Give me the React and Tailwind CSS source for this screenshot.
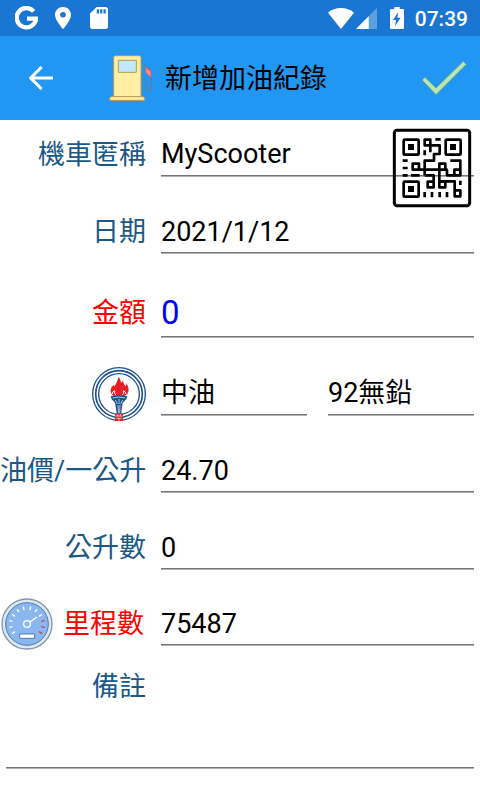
import React from "react";

function StatusBar() {
  return (
    <div className="flex h-9 items-center bg-[#1976d2] pl-[15px] pr-3 text-white">
      <svg className="h-6 w-[23px]" viewBox="0 0 69 72" fill="none" stroke="currentColor" strokeWidth="13">
        <path d="M56 16A29 29 0 1 0 63 38H36" />
      </svg>
      <svg className="ml-[17px] h-[22px] w-4" viewBox="5 2 14 20" preserveAspectRatio="none" fill="currentColor">
        <path d="M12 2C8.1 2 5 5.1 5 9c0 5.300 7 13 7 13s7-7.700 7-13c0-3.900-3.100-7-7-7zm0 9.500a2.500 2.500 0 1 1 0-5 2.500 2.500 0 0 1 0 5z" />
      </svg>
      <svg className="ml-[19px] h-[22px] w-[18px]" viewBox="4 2 16 20" preserveAspectRatio="none" fill="currentColor">
        <path d="M18 2h-8L4 8v12c0 1.100.9 2 2 2h12c1.100 0 2-.9 2-2V4c0-1.100-.9-2-2-2zm-6 6h-2V4h2v4zm3 0h-2V4h2v4zm3 0h-2V4h2v4z" />
      </svg>
      <svg className="ml-auto h-[21px] w-[26px]" viewBox="0 0 78 63" fill="currentColor">
        <path d="M39 63 0 14Q16 0 39 0T78 14Z" />
      </svg>
      <svg className="ml-[2px] h-[21px] w-[21px]" viewBox="0 0 63 63">
        <path d="M63 0V63H0Z" fill="#5e9fe0" />
        <path d="M38 25V63H0Z" fill="#fff" />
      </svg>
      <svg className="ml-[13px] h-[22px] w-[14px]" viewBox="0 0 42 66">
        <path d="M13 0H29V6H39Q42 6 42 9V63Q42 66 39 66H3Q0 66 0 63V9Q0 6 3 6H13Z" fill="#fff" />
        <path d="M25 15 9 39H18L15 58 32 32H22Z" fill="#1976d2" />
      </svg>
      <span className="ml-[11px] pt-px text-[21px] leading-6 font-medium">07:39</span>
    </div>
  );
}

function PumpIcon() {
  return (
    <svg className="h-[52px] w-[50px]" viewBox="18 21 150 156" fill="none" strokeWidth="3">
      <path d="M131 58 154 78V128Q154 136 146 136T138 128V109Q138 103 132 103H124" stroke="#5f7f9c" strokeWidth="4" />
      <path d="M137 67 153 79V97L137 83Z" fill="#f78f8f" stroke="#dc5b62" />
      <path d="M41 156V37Q41 32 46 32H118Q123 32 123 37V156Z" fill="#ffeea3" stroke="#b89b4c" />
      <path d="M55 46H109V82H55Z" fill="#c2e8ff" stroke="#b89b4c" />
      <path d="M29 166V161Q29 155 35 155H128Q134 155 134 161V166Z" fill="#ffeea3" stroke="#b89b4c" />
    </svg>
  );
}

function Header() {
  return (
    <header className="flex h-[84px] items-center bg-[#2196f3] pr-3 pl-[29px]">
      <button type="button" aria-label="返回" className="text-white">
        <svg className="h-6 w-6" viewBox="0 0 72 72" fill="none" stroke="currentColor" strokeWidth="9">
          <path d="M72 36H5M38 3 5 36 38 69" />
        </svg>
      </button>
      <div className="ml-[53px]">
        <PumpIcon />
      </div>
      <h1 className="ml-[9px] pt-[2px] text-[27px] leading-8 text-black">新增加油紀錄</h1>
      <button type="button" aria-label="儲存" className="ml-auto">
        <svg className="h-9 w-12" viewBox="540 180 144 108">
          <path d="M546 240 555 232 588 264 670 184 679 193 588 284Z" fill="#b9e5b8" stroke="#5fa883" strokeWidth="3" />
        </svg>
      </button>
    </header>
  );
}

function QrIcon() {
  return (
    <svg className="h-20 w-20" viewBox="36 24 240 240" fill="none" stroke="#000" strokeWidth="8" strokeLinejoin="round">
      <rect x="43" y="31" width="226" height="226" rx="8" strokeWidth="9" />
      <rect x="71" y="59" width="45" height="45" rx="3" />
      <rect x="197" y="59" width="45" height="45" rx="3" />
      <rect x="71" y="185" width="45" height="45" rx="3" />
      <path d="M84 81H102M210 81H228M84 207H102" strokeWidth="18" />
      <path d="M134 59H151V76H134ZM151 76V97M151 76H179V102H162V122H134V166M166 58H182M134 91V106" />
      <path d="M68 122H83M68 144H83M68 166H83M93 166H119" />
      <path d="M98 131H117V149H98ZM117 149H203M178 131H196V149H178ZM178 149V202M134 166H161V202M143 185H161V202H143ZM178 185H196V202H178ZM201 149V166H223" />
      <path d="M211 122H241V166H223V149H241M178 184H224V211M224 211H241V229H224ZM241 182V195" />
      <path d="M134 216V232M156 216V232M179 216V232M201 216V232" />
    </svg>
  );
}

function CpcLogo() {
  return (
    <svg className="h-[54px] w-[54px]" viewBox="36 33 162 162" role="img" aria-label="中油">
      <g fill="#fff" stroke="#1d4f91">
        <circle cx="117" cy="114" r="79" strokeWidth="4" />
        <circle cx="117" cy="114" r="70" strokeWidth="5" />
        <circle cx="117" cy="114" r="61" strokeWidth="4" />
      </g>
      <path d="M101 120Q90 112 92 101 94 91 102 86L103 92Q112 78 116 62 122 70 123 80L129 74Q130 84 137 91 141 86 139 80 148 96 145 107 142 117 131 120Z" fill="#ec1c24" />
      <path d="M96 114Q98 105 104 104 101 112 109 119M138 114Q137 106 130 104 134 112 125 119" fill="none" stroke="#fff" strokeWidth="3" />
      <path d="M92 121Q117 114 142 121L139 130 128 140 123 176H111L105 140 95 130Z" fill="#1d4f91" />
      <path d="M98 126Q117 120 136 126M106 132 112 144M117 129V144M128 132 122 144M114 147 116 172M120 147 119 172" fill="none" stroke="#fff" strokeWidth="2" />
      <path d="M105 173H129V195H105Z" fill="#ec1c24" />
      <path d="M106 180H128M109 187H125M113 174V180M121 174V180M117 187V194" stroke="#fff" strokeWidth="2" />
    </svg>
  );
}

function GaugeIcon() {
  return (
    <svg className="h-[52px] w-[52px]" viewBox="3 21 156 156" fill="none">
      <circle cx="81" cy="99" r="75" fill="#dfe8ee" stroke="#8199ae" strokeWidth="4" />
      <circle cx="81" cy="99" r="64" fill="#8bb7f0" stroke="#4e7ab5" strokeWidth="3" />
      <path d="M36 128 45 122M28 109 38 107M28 89 38 91M36 70 45 76M51 55 57 63M70 47 72 57M92 47 90 57M111 55 105 63M126 70 117 76" stroke="#fff" strokeWidth="4" />
      <path d="M124 91 134 89M124 107 134 109M117 122 126 128" stroke="#c74343" strokeWidth="4" />
      <path d="M90 93 111 78" stroke="#fff" strokeWidth="4" />
      <circle cx="81" cy="99" r="10" stroke="#fff" strokeWidth="4" />
      <path d="M59 129H104V142H59Z" fill="#fff" stroke="#4e7ab5" strokeWidth="3" />
    </svg>
  );
}

const line = "block w-full min-w-0 appearance-none rounded-none border-0 border-b border-[#757575] bg-transparent p-0 shadow-[0_1px_0_#b0b0b0] outline-none";
const field = line + " h-[43px] pt-px text-[27px] text-black";
const labelText = "shrink-0 text-right text-[27px] leading-10 whitespace-nowrap";

function Row({ id, label, red, children }) {
  return (
    <div className="flex items-center gap-[15px]">
      <label htmlFor={id} className={labelText + " w-[146px] " + (red ? "text-[#ff0000]" : "text-[#1c5885]")}>
        {label}
      </label>
      <div className="min-w-0 flex-1 pb-px">{children}</div>
    </div>
  );
}

export default function App() {
  return (
    <div className="min-h-screen bg-white font-['Roboto','Noto_Sans_CJK_TC',sans-serif]">
      <StatusBar />
      <Header />
      <form className="relative flex flex-col gap-[33px] pt-[13px] pr-[6px]" onSubmit={(e) => e.preventDefault()}>
        <Row id="scooter" label="機車匿稱">
          <select id="scooter" className={field}>
            <option>MyScooter</option>
          </select>
        </Row>
        <button type="button" aria-label="掃描 QR 碼" className="absolute top-2 right-2">
          <QrIcon />
        </button>
        <Row id="date" label="日期">
          <input id="date" type="text" defaultValue="2021/1/12" className={field} />
        </Row>
        <Row id="amount" label="金額" red>
          <input id="amount" type="text" inputMode="numeric" defaultValue="0" className={line + " h-[50px] pt-px text-[33px] text-[#0000ff]"} />
        </Row>
        <div className="flex items-center gap-[15px] pt-px">
          <div className="-my-[5px] flex w-[146px] shrink-0 justify-end">
            <CpcLogo />
          </div>
          <div className="grid flex-1 grid-cols-2 gap-[21px] pb-px">
            <select aria-label="加油站" className={field}>
              <option>中油</option>
            </select>
            <select aria-label="油品" className={field}>
              <option>92無鉛</option>
            </select>
          </div>
        </div>
        <Row id="price" label="油價/一公升">
          <input id="price" type="text" inputMode="decimal" defaultValue="24.70" className={field} />
        </Row>
        <Row id="liters" label="公升數">
          <input id="liters" type="text" inputMode="decimal" defaultValue="0" className={field} />
        </Row>
        <div className="-mt-px flex items-center gap-[15px]">
          <div className="-my-1 flex w-[146px] shrink-0 items-center justify-between pr-[2px] pl-px">
            <GaugeIcon />
            <label htmlFor="mileage" className={labelText + " text-[#ff0000]"}>
              里程數
            </label>
          </div>
          <div className="min-w-0 flex-1 pb-px">
            <input id="mileage" type="text" inputMode="numeric" defaultValue="75487" className={field} />
          </div>
        </div>
        <div className="-mt-3 pl-[6px]">
          <label htmlFor="note" className={labelText + " block w-[140px] text-[#1c5885]"}>
            備註
          </label>
          <textarea id="note" className={line + " h-[61px] resize-none text-[27px] text-black"} />
        </div>
      </form>
    </div>
  );
}
